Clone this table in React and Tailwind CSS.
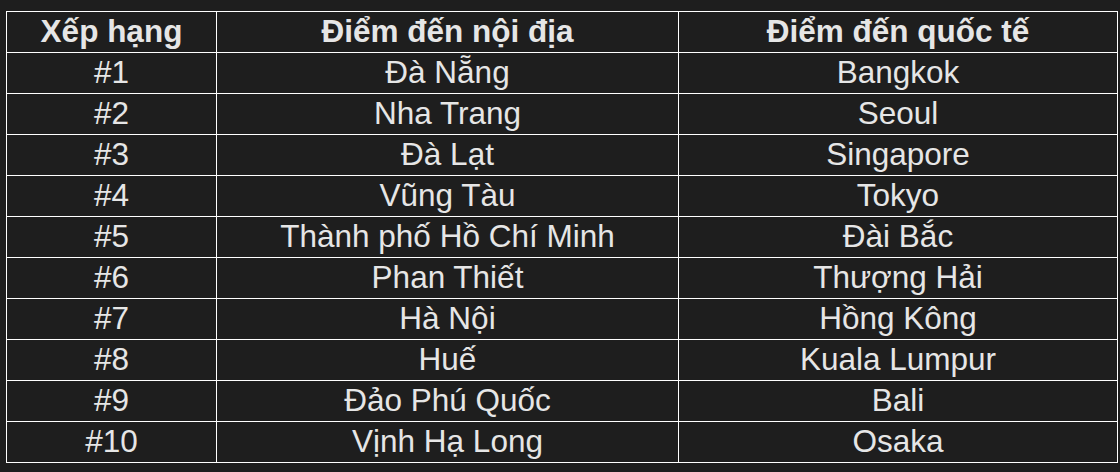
import React from "react";

const rows = [
  ["#1", "Đà Nẵng", "Bangkok"],
  ["#2", "Nha Trang", "Seoul"],
  ["#3", "Đà Lạt", "Singapore"],
  ["#4", "Vũng Tàu", "Tokyo"],
  ["#5", "Thành phố Hồ Chí Minh", "Đài Bắc"],
  ["#6", "Phan Thiết", "Thượng Hải"],
  ["#7", "Hà Nội", "Hồng Kông"],
  ["#8", "Huế", "Kuala Lumpur"],
  ["#9", "Đảo Phú Quốc", "Bali"],
  ["#10", "Vịnh Hạ Long", "Osaka"],
];

export default function App() {
  return (
    <div
      className="w-[1120px] h-[472px] bg-[#1e1e1e] pt-[11px] pl-[6px]"
      style={{ fontFamily: '"Liberation Sans", Arial, sans-serif' }}
    >
      <table className="border-collapse table-fixed w-[1111px] text-[#e6e6e6] text-[31.5px] leading-none">
        <colgroup>
          <col className="w-[210px]" />
          <col className="w-[462px]" />
          <col className="w-[439px]" />
        </colgroup>
        <thead>
          <tr className="h-[41px]">
            <th className="border border-white font-bold text-center p-0">Xếp hạng</th>
            <th className="border border-white font-bold text-center p-0">Điểm đến nội địa</th>
            <th className="border border-white font-bold text-center p-0">Điểm đến quốc tế</th>
          </tr>
        </thead>
        <tbody>
          {rows.map((r) => (
            <tr key={r[0]} className="h-[41px]">
              <td className="border border-white text-center p-0">{r[0]}</td>
              <td className="border border-white text-center p-0">{r[1]}</td>
              <td className="border border-white text-center p-0">{r[2]}</td>
            </tr>
          ))}
        </tbody>
      </table>
    </div>
  );
}
